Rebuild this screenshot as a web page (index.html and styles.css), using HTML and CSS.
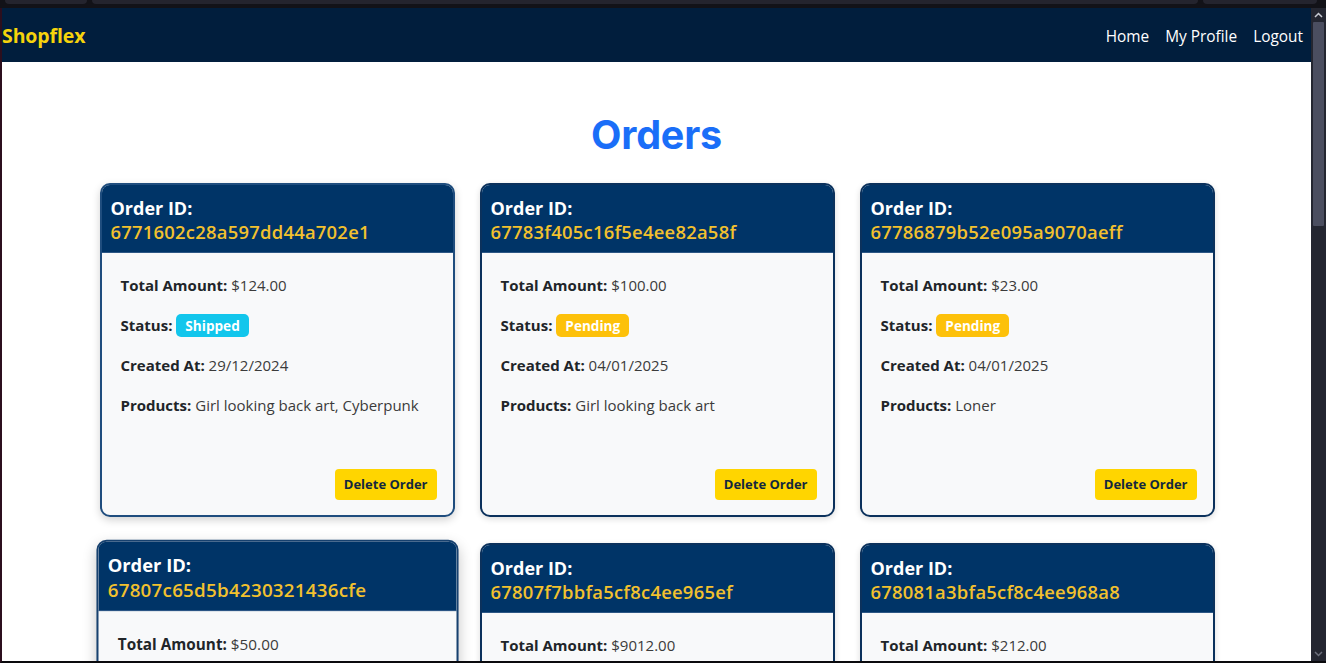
FILE: index.html
```html
<!DOCTYPE html>
<html lang="en">
<head>
<meta charset="utf-8">
<title>Shopflex - Orders</title>
<link rel="stylesheet" href="styles.css">
</head>
<body>
<div class="frame">
  <div class="titlebar">
    <span class="tab tab-a"></span>
    <span class="tab tab-b"></span>
    <span class="tab tab-c"></span>
  </div>
  <div class="window">
    <div class="viewport">
      <nav class="navbar">
        <a class="brand" href="#">Shopflex</a>
        <ul class="nav-links">
          <li><a href="#">Home</a></li>
          <li><a href="#">My Profile</a></li>
          <li><a href="#">Logout</a></li>
        </ul>
      </nav>
      <main class="content">
        <h1 class="page-title">Orders</h1>
        <div class="orders-grid">
          <div class="order-card card-fading">
            <div class="card-header">
              <div class="order-label">Order ID:</div>
              <div class="order-id">6771602c28a597dd44a702e1</div>
            </div>
            <div class="card-body">
              <p><strong>Total Amount:</strong> $124.00</p>
              <p><strong>Status:</strong> <span class="badge badge-shipped">Shipped</span></p>
              <p><strong>Created At:</strong> 29/12/2024</p>
              <p><strong>Products:</strong> Girl looking back art, Cyberpunk</p>
              <button class="delete-btn">Delete Order</button>
            </div>
          </div>
          <div class="order-card">
            <div class="card-header">
              <div class="order-label">Order ID:</div>
              <div class="order-id">67783f405c16f5e4ee82a58f</div>
            </div>
            <div class="card-body">
              <p><strong>Total Amount:</strong> $100.00</p>
              <p><strong>Status:</strong> <span class="badge badge-pending">Pending</span></p>
              <p><strong>Created At:</strong> 04/01/2025</p>
              <p><strong>Products:</strong> Girl looking back art</p>
              <button class="delete-btn">Delete Order</button>
            </div>
          </div>
          <div class="order-card">
            <div class="card-header">
              <div class="order-label">Order ID:</div>
              <div class="order-id">67786879b52e095a9070aeff</div>
            </div>
            <div class="card-body">
              <p><strong>Total Amount:</strong> $23.00</p>
              <p><strong>Status:</strong> <span class="badge badge-pending">Pending</span></p>
              <p><strong>Created At:</strong> 04/01/2025</p>
              <p><strong>Products:</strong> Loner</p>
              <button class="delete-btn">Delete Order</button>
            </div>
          </div>
          <div class="order-card card-hover">
            <div class="card-header">
              <div class="order-label">Order ID:</div>
              <div class="order-id">67807c65d5b4230321436cfe</div>
            </div>
            <div class="card-body">
              <p><strong>Total Amount:</strong> $50.00</p>
              <p><strong>Status:</strong> <span class="badge badge-pending">Pending</span></p>
              <p><strong>Created At:</strong> 09/01/2025</p>
              <p><strong>Products:</strong> Loner</p>
              <button class="delete-btn">Delete Order</button>
            </div>
          </div>
          <div class="order-card">
            <div class="card-header">
              <div class="order-label">Order ID:</div>
              <div class="order-id">67807f7bbfa5cf8c4ee965ef</div>
            </div>
            <div class="card-body">
              <p><strong>Total Amount:</strong> $9012.00</p>
              <p><strong>Status:</strong> <span class="badge badge-pending">Pending</span></p>
              <p><strong>Created At:</strong> 09/01/2025</p>
              <p><strong>Products:</strong> Cyberpunk</p>
              <button class="delete-btn">Delete Order</button>
            </div>
          </div>
          <div class="order-card">
            <div class="card-header">
              <div class="order-label">Order ID:</div>
              <div class="order-id">678081a3bfa5cf8c4ee968a8</div>
            </div>
            <div class="card-body">
              <p><strong>Total Amount:</strong> $212.00</p>
              <p><strong>Status:</strong> <span class="badge badge-pending">Pending</span></p>
              <p><strong>Created At:</strong> 10/01/2025</p>
              <p><strong>Products:</strong> Girl looking back art</p>
              <button class="delete-btn">Delete Order</button>
            </div>
          </div>
        </div>
      </main>
    </div>
    <div class="scrollbar">
      <div class="scroll-arrow">
        <svg width="9" height="6" viewBox="0 0 9 6"><path d="M1 5 L4.5 1.5 L8 5" fill="none" stroke="#c9cbd4" stroke-width="1.5"/></svg>
      </div>
      <div class="scroll-track">
        <div class="scroll-thumb"></div>
      </div>
      <div class="scroll-arrow">
        <svg width="9" height="6" viewBox="0 0 9 6"><path d="M1 1 L4.5 4.5 L8 1" fill="none" stroke="#6c6f7c" stroke-width="1.5"/></svg>
      </div>
    </div>
  </div>
</div>
</body>
</html>
```

FILE: styles.css
```css
* {
  box-sizing: border-box;
}

html, body {
  margin: 0;
  padding: 0;
  background: #101016;
  overflow: hidden;
}

body {
  font-family: "Open Sans", "Noto Sans", sans-serif;
}

.frame {
  width: 1326px;
  height: 663px;
  display: flex;
  flex-direction: column;
  background: #0c0c10;
}

.titlebar {
  height: 8px;
  flex: none;
  background: #121218;
  display: flex;
  gap: 5px;
  padding: 0 0 0 5px;
}

.tab {
  display: block;
  height: 4px;
  background: #24242e;
  border-radius: 0 0 5px 5px;
}

.tab-a { width: 82px; }
.tab-b { width: 1106px; }
.tab-c { width: 114px; }

.window {
  flex: 1;
  display: flex;
  border-left: 2px solid #2c0f1e;
  border-bottom: 2px solid #0a0a0d;
  min-height: 0;
}

.viewport {
  width: 1309px;
  flex: none;
  overflow: hidden;
  background: #ffffff;
  display: flex;
  flex-direction: column;
}

.navbar {
  height: 54px;
  flex: none;
  background: #011e3d;
  display: flex;
  align-items: center;
  justify-content: space-between;
  padding: 0 0 0 0;
}

.brand {
  color: #f6d30c;
  font-weight: 700;
  font-size: 19.5px;
  text-decoration: none;
  letter-spacing: -0.1px;
}

.nav-links {
  list-style: none;
  margin: 0;
  padding: 0;
  display: flex;
}

.nav-links a {
  display: block;
  color: #ffffff;
  text-decoration: none;
  font-size: 15.4px;
  padding: 8px 8px 6px 8px;
}

.content {
  padding-top: 50px;
}

.page-title {
  margin: 0 0 25px 0;
  text-align: center;
  font-family: "Inter", "Liberation Sans", sans-serif;
  font-weight: 700;
  font-size: 39.5px;
  line-height: 46px;
  color: #1a6ef8;
  letter-spacing: -0.2px;
}

.orders-grid {
  display: grid;
  grid-template-columns: repeat(3, 355px);
  justify-content: center;
  column-gap: 25px;
  row-gap: 26px;
  padding-left: 1px;
}

.order-card {
  border: 2px solid #0b315c;
  border-radius: 10px;
  overflow: hidden;
  background: #f8f9fa;
  box-shadow: 0 2px 6px rgba(0, 0, 0, 0.14);
  display: flex;
  flex-direction: column;
}

.card-fading {
  border-color: #1f4d7e;
  box-shadow: 0 3px 8px rgba(0, 0, 0, 0.18);
}

.card-hover {
  transform: scale(1.02);
  border-color: #17416f;
  box-shadow: 0 6px 14px rgba(0, 0, 0, 0.22);
}

.card-header {
  background: #003467;
  padding: 11px 10px 8px 9px;
  border-bottom: 1px solid #2d5785;
}

.order-label {
  color: #ffffff;
  font-weight: 700;
  font-size: 18px;
  line-height: 24px;
}

.order-id {
  color: #f2c12e;
  font-weight: 600;
  font-size: 18.4px;
  line-height: 24px;
  letter-spacing: 0.25px;
}

.card-body {
  padding: 20px 16px 15px 19px;
  display: flex;
  flex-direction: column;
  color: #3b3b3b;
  font-size: 15px;
}

.card-body p {
  margin: 0 0 16px 0;
  line-height: 24px;
  height: 24px;
  white-space: nowrap;
}

.card-body strong {
  color: #212529;
  font-weight: 700;
}

.badge {
  display: inline-block;
  color: #ffffff;
  font-weight: 700;
  font-size: 13.6px;
  line-height: 18px;
  padding: 3px 9px 2px 9px;
  border-radius: 5px;
  vertical-align: 0px;
}

.badge-shipped {
  background: #12c6ec;
}

.badge-pending {
  background: #fdc10a;
}

.delete-btn {
  align-self: flex-end;
  margin-top: 36px;
  background: #ffd500;
  color: #13283e;
  border: none;
  border-radius: 4px;
  font-family: "Open Sans", "Noto Sans", sans-serif;
  font-weight: 700;
  font-size: 13px;
  line-height: 19px;
  height: 31px;
  padding: 6px 9px;
}

.scrollbar {
  width: 15px;
  flex: none;
  background: #242631;
  display: flex;
  flex-direction: column;
}

.scroll-arrow {
  height: 14px;
  flex: none;
  display: flex;
  align-items: center;
  justify-content: center;
}

.scroll-track {
  flex: 1;
  padding: 0 2px;
}

.scroll-thumb {
  height: 204px;
  background: #4b4e60;
  border-radius: 1px;
}
```
